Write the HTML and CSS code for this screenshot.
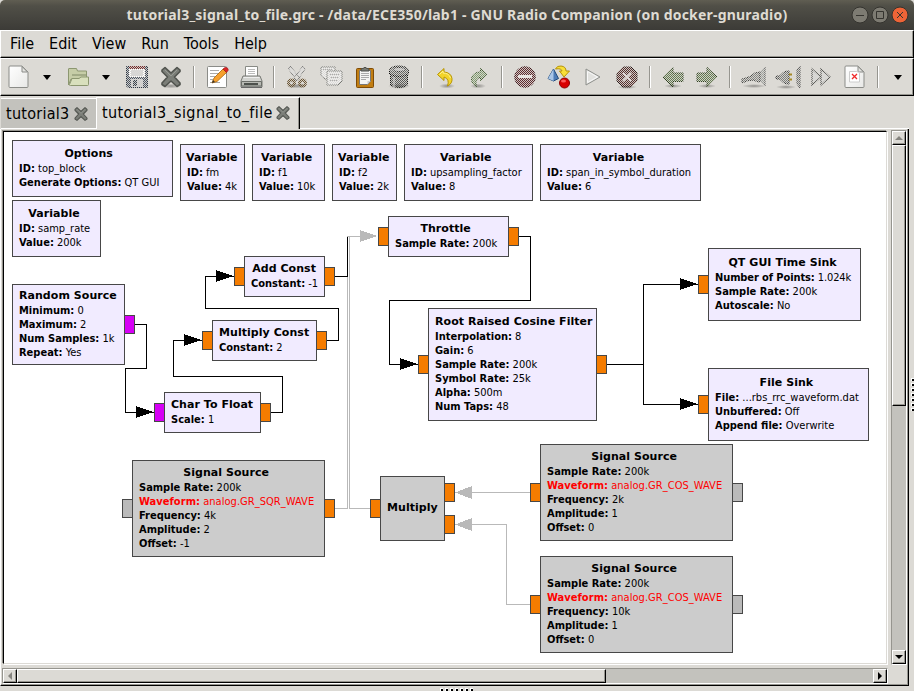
FILE: index.html
```html
<!DOCTYPE html>
<html lang="en">
<head>
<meta charset="utf-8">
<title>GNU Radio Companion</title>
<link rel="stylesheet" href="styles.css">
</head>
<body>
<svg class="defs" width="0" height="0" aria-hidden="true">
  <defs>
    <pattern id="dots" width="2" height="2" patternUnits="userSpaceOnUse">
      <rect width="2" height="2" fill="#fff" fill-opacity=".1"/><rect width="1" height="1" fill="#fff"/><rect x="1" y="1" width="1" height="1" fill="#fff"/>
    </pattern>
    <mask id="dim" maskUnits="userSpaceOnUse" x="0" y="0" width="26" height="26"><rect width="26" height="26" fill="url(#dots)" shape-rendering="crispEdges"/></mask>
    <linearGradient id="paper" x2="1" y2="1"><stop stop-color="#fff"/><stop offset="1" stop-color="#e8e8e6"/></linearGradient>
    <radialGradient id="shade"><stop stop-color="#000" stop-opacity=".35"/><stop offset="1" stop-color="#000" stop-opacity="0"/></radialGradient>
    <symbol id="cross" viewBox="0 0 24 24"><path d="M3 5 6 2.500 12 8 18 2.500 21 5 21 6.500 15.500 12 21 18 21 19.500 18 21.500 12 16 6 21.500 3 19.500 3 18 8.500 12 3 6.500Z" fill="#7b7e78" stroke="#50534e" stroke-width="1.600" stroke-linejoin="round"/><path d="M6 5l6 6 6-6" fill="none" stroke="#979a94" stroke-width="1"/></symbol>
  </defs>
</svg>
<div class="window">
  <header class="titlebar">
    <h1 class="title">tutorial3_signal_to_file.grc - /data/ECE350/lab1 - GNU Radio Companion (on docker-gnuradio)</h1>
    <div class="controls">
      <svg width="58" height="18" viewBox="0 0 58 18"><g stroke="#34332e"><circle cx="9" cy="9" r="8" fill="#7d7b72"/><circle cx="29" cy="9" r="8" fill="#7d7b72"/><circle cx="49" cy="9" r="8" fill="#ee6437"/></g><g fill="none" stroke="#35342f"><path d="M5 9.500h8M25.500 5.500h7v7h-7zM46 6l6 6M52 6l-6 6"/></g></svg>
    </div>
  </header>
  <nav class="menubar"><span>File</span><span>Edit</span><span>View</span><span>Run</span><span>Tools</span><span>Help</span></nav>
  <div class="toolbar">
    <span class="tool"><svg viewBox="0 0 24 24"><path d="M3 1h12l6 6v14.500a1 1 0 0 1-1 1H3a1 1 0 0 1-1-1V2a1 1 0 0 1 1-1z" fill="url(#paper)" stroke="#8b8c88"/><path d="M15 1.500v5.500h5.500z" fill="#e4e4e1" stroke="#8b8c88"/></svg></span>
    <span class="drop"><i></i></span>
    <span class="tool open"><svg viewBox="0 0 24 24"><path d="M2.500 20V4q0-.5.500-.5h7.500l1 2.500h9v8H5z" fill="#c6cda7" stroke="#8c9770"/><path d="M6 10h14" stroke="#7f8967"/><path d="M6 13.500h7l2-1.500h7.500v7.500q0 1-1 1H4.500q-1.500 0-1-1z" fill="#d9e0bd" stroke="#8c9770"/></svg></span>
    <span class="drop"><i></i></span>
    <span class="tool save"><svg viewBox="0 0 24 24"><g class="off-icon" mask="url(#dim)"><path d="M1.500 1.500h21v21H3l-1.500-1.500z" fill="#46566b" stroke="#26374f"/><path d="M4 1h16v11H4z" fill="#fff"/><path d="M4 1h16v3H4z" fill="#922"/><path d="M6 6h12M6 8h12M6 10h12" stroke="#aaa"/><path d="M6 14h12v8H6z" fill="#ccc"/><path d="M8 15h4v6H8z" fill="#345"/></g></svg></span>
    <span class="tool"><svg viewBox="0 0 24 24"><ellipse cx="12" cy="21" rx="10" ry="2.500" fill="url(#shade)"/><use href="#cross" width="24" height="24"/></svg></span>
    <span class="sep"></span>
    <span class="tool"><svg viewBox="0 0 24 24"><rect x="2.500" y="1.500" width="19" height="21" rx="1" fill="#fff" stroke="#8b8c88"/><path d="M5 5.500h9M5 8.500h9M5 11.500h5M5 14.500h3M5 17.500h10" stroke="#aaa"/><path d="m7 18 2-5L18 4l3.500 3.500L12 16.500z" fill="#f6a02d" stroke="#a86509" stroke-width=".8"/><path d="m18 4 2-1.500q3-.5 3.300 2.500L21.500 7.500z" fill="#dd2525" stroke="#a01616" stroke-width=".7"/><path d="m7 18 1-3 2 2z" fill="#333"/></svg></span>
    <span class="tool"><svg viewBox="0 0 24 24"><path d="M6.500 12V1.500h12V12" fill="#fff" stroke="#888a85"/><path d="M9 4.500h7M9 6.500h7M9 8.500h7" stroke="#bbb"/><path d="M4 11h17l2 5v6H2v-6z" fill="#d2d3cf" stroke="#777974"/><path d="M4.500 12.500h16" stroke="#eee"/><path d="M2.500 16.500h20v4.500h-20z" fill="#b7b9b3" stroke="#6b6e68"/><path d="M5 18h14v2H5z" fill="#4c504b"/><path d="M2 22.500h21" stroke="#666"/></svg></span>
    <span class="sep"></span>
    <span class="tool"><svg viewBox="0 0 24 24"><ellipse cx="12" cy="21" rx="10" ry="2.500" fill="url(#shade)"/><g class="off-icon" mask="url(#dim)"><path d="M5 1 3.500 4 12 16l3-3zM18 1l2 3-8 12-3-3z" fill="#ddd" stroke="#777"/><g fill="none" stroke="#79521a" stroke-width="3"><ellipse cx="6.500" cy="18" rx="3" ry="3"/><ellipse cx="17.500" cy="18" rx="3" ry="3"/></g></g></svg></span>
    <span class="tool"><svg viewBox="0 0 24 24"><g class="off-icon" mask="url(#dim)"><g fill="#eee" stroke="#747670"><path d="M2 2h14v12H6l-4-3z"/><path d="M8 6h15v10l-4 4H8z"/></g><path d="M4 4.500h9M11 9.500h9M11 12.500h9M11 15.500h8" stroke="#aaa"/></g></svg></span>
    <span class="tool"><svg viewBox="0 0 24 24"><rect x="3.500" y="3.500" width="17" height="19" rx="1" fill="#c17d11" stroke="#7e4b06"/><path d="M6.500 5.500h11v11l-3 3h-8z" fill="#f5f5f3" stroke="#777"/><path d="M8 8.500h8M8 10.500h8M8 12.500h8M8 14.500h5" stroke="#aaa"/><path d="M17.500 16h-3v3.500z" fill="#ccc"/><path d="M8 6V4l3-1q1-2 2 0l3 1v2z" fill="#777972" stroke="#4f514d"/></svg></span>
    <span class="tool"><svg viewBox="0 0 24 24"><ellipse cx="12" cy="21" rx="11" ry="3" fill="url(#shade)"/><g class="off-icon" mask="url(#dim)"><path d="M3.500 9v11q8.500 5 17 0V9z" fill="#585b56" stroke="#151814"/><ellipse cx="12" cy="5.500" rx="9.500" ry="4.500" fill="#7b7e79" stroke="#111"/><path d="M2.500 6v3q9.500 5 19 0V6" fill="#676a65" stroke="#111"/><path d="M7 12v10" fill="none" stroke="#999" stroke-width="2"/><ellipse cx="12" cy="4.500" rx="6" ry="2" fill="#bbb" stroke="#333"/></g></svg></span>
    <span class="sep"></span>
    <span class="tool"><svg viewBox="0 0 24 24"><ellipse cx="14" cy="21" rx="8" ry="2.500" fill="url(#shade)"/><path d="M4.500 9.500 11 3.500V7q7 .5 8 6.500.5 5-4.500 7.500Q17 14 11 12v3.500z" fill="#f2d42a" stroke="#b79504"/><path d="M6.500 9.500 10 6v2q6 0 7.500 5" fill="none" stroke="#fff18b"/></svg></span>
    <span class="tool"><svg viewBox="0 0 24 24"><ellipse cx="11" cy="21" rx="8" ry="2.500" fill="url(#shade)"/><g class="off-icon" mask="url(#dim)"><path d="M20 9.500 13.500 3.500V7Q5 7 4.500 14q0 5 5 7.500Q7 14 13.500 12v3.500z" fill="#79a65c" stroke="#315e18"/></g></svg></span>
    <span class="sep"></span>
    <span class="tool"><svg viewBox="0 0 24 24"><g class="off-icon" mask="url(#dim)"><circle cx="12" cy="12" r="10.300" fill="#7b2328" stroke="#511419"/></g><path d="M5 10h14v3H5z" fill="#e8e4e1"/></svg></span>
    <span class="tool"><svg viewBox="0 0 24 24"><path d="m6.500 4 5 9.500-5 2.500L1 13.500z" fill="#4d7cb6" stroke="#204a7c"/><path d="M6.500 4v12L1 13.500z" fill="#a9c6e7"/><path d="M8.500 4Q10 .5 14 1q5 .5 5 5h3.500L17 12l-4.500-6H15q-.5-3-6.500-2z" fill="#f8df38" stroke="#b59209"/><circle cx="17.500" cy="18" r="5" fill="#d80000" stroke="#8d0000"/><ellipse cx="16.500" cy="16" rx="2.500" ry="1.500" fill="#fc5b5b"/></svg></span>
    <span class="tool"><svg viewBox="0 0 24 24"><path d="M5 4v16L19 12z" fill="#e2e2df" stroke="#8e908c"/><path d="M6.500 6.500v11L16.500 12z" fill="none" stroke="#f8f8f8"/></svg></span>
    <span class="tool"><svg viewBox="0 0 24 24"><ellipse cx="12" cy="22" rx="10" ry="2" fill="url(#shade)"/><g class="off-icon" mask="url(#dim)"><path d="M8 2h8l6 6v8l-6 6H8l-6-6V8z" fill="#6b2b25" stroke="#341713"/></g><path d="m8 8 8 8M16 8l-8 8" stroke="#dfd8d5" stroke-width="2"/></svg></span>
    <span class="sep"></span>
    <span class="tool"><svg viewBox="0 0 24 24"><ellipse cx="12" cy="21" rx="9" ry="2" fill="url(#shade)"/><g class="off-icon" mask="url(#dim)"><path d="M2 12 12 2.500V8h10v8.500H12V22z" fill="#5c803c" stroke="#27450d"/></g></svg></span>
    <span class="tool"><svg viewBox="0 0 24 24"><ellipse cx="12" cy="21" rx="9" ry="2" fill="url(#shade)"/><g class="off-icon" mask="url(#dim)"><path d="M22 12 12 2.500V8H2v8.500h10V22z" fill="#5c803c" stroke="#27450d"/></g></svg></span>
    <span class="sep"></span>
    <span class="tool"><svg class="wide" viewBox="0 0 26 24"><ellipse cx="13" cy="21" rx="12" ry="2" fill="url(#shade)"/><g class="off-icon" mask="url(#dim)"><path d="M1 14q5-1 9-3 3-4 9-4v10q-4 0-6-2-7 0-12 3z" fill="#858783" stroke="#3c3e3a"/><path d="M19 7l5-5v19l-5-5z" fill="#a0a29d" stroke="#555"/></g></svg></span>
    <span class="tool"><svg class="wide" viewBox="0 0 26 24"><ellipse cx="11" cy="22" rx="10" ry="2" fill="url(#shade)"/><g class="off-icon" mask="url(#dim)"><path d="M1 11h4q3-5 9-5v13q-6 0-9-5H1z" fill="#7c7e79" stroke="#333"/><path d="M22 5l3-4v22l-3-4z" fill="#868884" stroke="#555"/></g><path d="M14 9.500h3M14 14.500h3" stroke="#a58a28" stroke-width="2"/></svg></span>
    <span class="tool"><svg viewBox="0 0 24 24"><g class="off-icon" mask="url(#dim)"><path d="M3 4v16l9-8zM12 4v16l9-8z" fill="#d4d5d2" stroke="#555753" stroke-width="1.300"/></g></svg></span>
    <span class="tool"><svg viewBox="0 0 24 24"><path d="M3 1h12l6 6v14.500a1 1 0 0 1-1 1H3a1 1 0 0 1-1-1V2a1 1 0 0 1 1-1z" fill="url(#paper)" stroke="#8b8c88"/><path d="M15 1.500v5.500h5.500z" fill="#e4e4e1" stroke="#8b8c88"/><path d="M6.500 6.500h7l3 1v9.500h-10z" fill="#fff" stroke="#ccc"/><path d="m9 9 5 5M14 9l-5 5" stroke="#ef2929" stroke-width="1.300"/></svg></span>
    <span class="sep"></span>
    <span class="drop last"><i></i></span>
  </div>
  <div class="tabs">
    <div class="tab"><span>tutorial3</span><svg viewBox="0 0 24 24"><use href="#cross"/></svg></div>
    <div class="tab active"><span>tutorial3_signal_to_file</span><svg viewBox="0 0 24 24"><use href="#cross"/></svg></div>
    <div class="tabs-rest"></div>
  </div>
  <div class="body">
    <div class="page">
      <main class="canvas">
        <svg class="wires" viewBox="4 132 882 531" shape-rendering="crispEdges">
          <g fill="none" stroke="#b9b9b9"><path d="M335 508.500H347.500V236.500H362M370 508.500H349.500V236.500M456 492.500H530M456 524.500H506.500V604.500H530"/></g>
          <g fill="none" stroke="#000"><path d="M135 324.500H146.500V368.500H125.500V412.500H154M271 412.500H282.500V376.500H173.500V340.500H202M327 340.500H338.500V308.500H205.500V276.500H234M335 276.500H347.500V236.500M519 236.500H530.500V300.500H389.500V364.500H418M607 364.500H643.500M698 284.500H643.500V404.500H698"/></g>
          <path fill="#b9b9b9" d="M360 230v12l17-6zM472 486v13l-17-6.500zM472 518v13l-17-6.500z"/>
          <path fill="#000" d="M136 406v12l17-6zM184 334v12l17-6zM216 270v12l17-6zM400 358v12l17-6zM680 278v12l17-6zM680 398v12l17-6z"/>
          <g stroke="#474747">
            <g fill="#d600f5"><path d="M124.500 315.500h10v18h-10zM154.500 403.500h10v18h-10z"/></g>
            <g fill="#f57c00"><path d="M260.500 403.500h10v18h-10zM202.500 331.500h10v18h-10zM316.500 331.500h10v18h-10zM234.500 267.500h10v18h-10zM324.500 267.500h10v18h-10zM378.500 227.500h10v18h-10zM508.500 227.500h10v18h-10zM418.500 355.500h10v18h-10zM596.500 355.500h10v18h-10zM698.500 275.500h10v18h-10zM698.500 395.500h10v18h-10zM324.500 499.500h10v18h-10zM370.500 499.500h10v18h-10zM444.500 483.500h10v18h-10zM444.500 515.500h10v18h-10zM530.500 483.500h10v18h-10zM530.500 595.500h10v18h-10z"/></g>
            <g fill="#bababa"><path d="M122.500 499.500h10v18h-10zM732.500 483.500h10v18h-10zM732.500 595.500h10v18h-10z"/></g>
          </g>
        </svg>
        <section class="node options"><div><h2>Options</h2><p><b>ID:</b> top_block</p><p><b>Generate Options:</b> QT GUI</p></div></section>
        <section class="node fm"><div><h2>Variable</h2><p><b>ID:</b> fm</p><p><b>Value:</b> 4k</p></div></section>
        <section class="node f1"><div><h2>Variable</h2><p><b>ID:</b> f1</p><p><b>Value:</b> 10k</p></div></section>
        <section class="node f2"><div><h2>Variable</h2><p><b>ID:</b> f2</p><p><b>Value:</b> 2k</p></div></section>
        <section class="node upsampling"><div><h2>Variable</h2><p><b>ID:</b> upsampling_factor</p><p><b>Value:</b> 8</p></div></section>
        <section class="node span"><div><h2>Variable</h2><p><b>ID:</b> span_in_symbol_duration</p><p><b>Value:</b> 6</p></div></section>
        <section class="node samp-rate"><div><h2>Variable</h2><p><b>ID:</b> samp_rate</p><p><b>Value:</b> 200k</p></div></section>
        <section class="node random"><div><h2>Random Source</h2><p><b>Minimum:</b> 0</p><p><b>Maximum:</b> 2</p><p><b>Num Samples:</b> 1k</p><p><b>Repeat:</b> Yes</p></div></section>
        <section class="node char-float"><div><h2>Char To Float</h2><p><b>Scale:</b> 1</p></div></section>
        <section class="node mult-const"><div><h2>Multiply Const</h2><p><b>Constant:</b> 2</p></div></section>
        <section class="node add-const"><div><h2>Add Const</h2><p><b>Constant:</b> -1</p></div></section>
        <section class="node throttle"><div><h2>Throttle</h2><p><b>Sample Rate:</b> 200k</p></div></section>
        <section class="node rrc"><div><h2>Root Raised Cosine Filter</h2><p><b>Interpolation:</b> 8</p><p><b>Gain:</b> 6</p><p><b>Sample Rate:</b> 200k</p><p><b>Symbol Rate:</b> 25k</p><p><b>Alpha:</b> 500m</p><p><b>Num Taps:</b> 48</p></div></section>
        <section class="node time-sink"><div><h2>QT GUI Time Sink</h2><p class="points"><b>Number of Points:</b> 1.024k</p><p><b>Sample Rate:</b> 200k</p><p><b>Autoscale:</b> No</p></div></section>
        <section class="node file-sink"><div><h2>File Sink</h2><p><b>File:</b> ...rbs_rrc_waveform.dat</p><p><b>Unbuffered:</b> Off</p><p><b>Append file:</b> Overwrite</p></div></section>
        <section class="node off sqr"><div><h2>Signal Source</h2><p><b>Sample Rate:</b> 200k</p><p class="bad"><b>Waveform:</b> analog.GR_SQR_WAVE</p><p><b>Frequency:</b> 4k</p><p><b>Amplitude:</b> 2</p><p><b>Offset:</b> -1</p></div></section>
        <section class="node off multiply"><div><h2>Multiply</h2></div></section>
        <section class="node off cos1"><div><h2>Signal Source</h2><p><b>Sample Rate:</b> 200k</p><p class="bad"><b>Waveform:</b> analog.GR_COS_WAVE</p><p><b>Frequency:</b> 2k</p><p><b>Amplitude:</b> 1</p><p><b>Offset:</b> 0</p></div></section>
        <section class="node off cos2"><div><h2>Signal Source</h2><p><b>Sample Rate:</b> 200k</p><p class="bad"><b>Waveform:</b> analog.GR_COS_WAVE</p><p><b>Frequency:</b> 10k</p><p><b>Amplitude:</b> 1</p><p><b>Offset:</b> 0</p></div></section>
      </main>
      <div class="scroll vertical"><span class="btn up"></span><span class="thumb"></span><span class="trough"></span><span class="btn down"></span></div>
      <div class="scroll horizontal"><span class="btn left"></span><span class="thumb"></span><span class="trough"></span><span class="btn right"></span></div>
    </div>
    <div class="grip-v"><i></i><i></i><i></i><i></i><i></i><i></i><i></i></div>
  </div>
  <div class="bottom"><i></i><i></i><i></i><i></i><i></i><i></i><i></i></div>
</div>
</body>
</html>
```
FILE: styles.css
```css
* { box-sizing: border-box; }
body { margin: 0; background: #dcdad5; overflow: hidden; }
.defs { position: absolute; }
.window { width: 914px; height: 691px; display: flex; flex-direction: column; background: #dcdad5; color: #000; font: 16px "DejaVu Sans Condensed", "DejaVu Sans", sans-serif; font-stretch: condensed; }
h1, h2, p { margin: 0; }

.titlebar { flex: none; height: 30px; display: flex; justify-content: center; align-items: center; position: relative; background: linear-gradient(#605e52, #504f47 20%, #3c3b37); border-radius: 5px 5px 0 0; }
.title { color: #dfdbd2; font: bold 14px/30px "Noto Sans", "Open Sans", sans-serif; letter-spacing: 0.2px; white-space: nowrap; }
.controls { position: absolute; right: 5px; top: 6px; height: 18px; }
.controls svg { display: block; }

.menubar { flex: none; height: 28px; display: flex; gap: 15px; padding-left: 9px; line-height: 25px; border: 1px solid #000; border-top-color: #fff; border-left-color: #fff; box-shadow: inset -1px -1px #96958f; }
.menubar span { letter-spacing: 0.02px; }
.toolbar { flex: none; height: 38px; display: flex; align-items: center; padding-left: 1px; border: 1px solid #000; border-top-color: #fff; border-left-color: #fff; box-shadow: inset -1px -1px #96958f; }
.tool { flex: none; width: 34px; height: 24px; padding-left: 5px; }
.tool svg { display: block; width: 24px; height: 24px; }
.tool svg.wide { width: 26px; }
.tool.open, .tool.save { margin-left: 3px; }
.off-icon { filter: saturate(0.6); }
.drop { flex: none; width: 22px; display: flex; justify-content: center; }
.drop i { border: solid transparent; border-width: 5px 4.5px 0; border-top-color: #000; }
.drop.last { width: 28px; }
.sep { flex: none; width: 12px; height: 22px; display: flex; }
.sep::before { content: ""; width: 2px; margin-left: 5px; background: linear-gradient(90deg, #96958f 50%, #fff 50%); }

.tabs { flex: none; height: 33px; display: flex; align-items: flex-end; padding-left: 1px; padding-top: 1px; }
.tab { display: flex; align-items: center; height: 31px; width: 95px; padding: 0 0 0 5px; gap: 4px; background: #c3c2bd; border-top: 1px solid #fff; border-bottom: 1px solid #fff; line-height: 28px; letter-spacing: 0.25px; white-space: nowrap; }
.tab svg { flex: none; width: 16px; height: 16px; }
.tab.active { width: 204px; height: 32px; padding: 0 0 2px 5px; gap: 2px; letter-spacing: 0.38px; background: #dcdad5; border: 1px solid #fff; border-bottom: 0; border-right: 1px solid #000; box-shadow: inset -1px 0 #96958f; }
.tabs-rest { flex: 1; height: 1px; margin-right: 5px; background: #fff; }

.body { flex: none; height: 557px; display: flex; align-items: flex-start; }
.page { width: 909px; height: 557px; border-left: 1px solid #fff; border-right: 1px solid #000; border-bottom: 1px solid #000; box-shadow: inset -1px -1px #96958f; padding: 1px; display: grid; grid-template-columns: 886px 16px; grid-template-rows: 535px 16px; column-gap: 3px; row-gap: 3px; }
.canvas { position: relative; width: 884px; height: 533px; margin: 1px; background: #fff; border: 1px solid; border-color: #000 #dcdad5 #dcdad5 #000; box-shadow: -1px -1px #96958f, 1px 1px #fff; }
.wires { position: absolute; left: 0; top: 0; width: 882px; height: 531px; }

.node { position: absolute; background: #f1ebff; border: 1px solid #474747; padding: 6px 0 0 6px; height: 57px; white-space: nowrap; }
.node > div { width: max-content; }
.node.off { background: #cccccc; }
.node h2 { font: bold 11px/14px "DejaVu Sans", sans-serif; letter-spacing: 0.05px; text-align: center; margin: 0 0 1px -1px; }
.node.random h2, .node.char-float h2, .node.mult-const h2, .node.rrc h2, .node.multiply h2 { margin-left: 0; }
.node p { font-size: 11px; line-height: 14px; }
.node .bad { color: #f00; letter-spacing: 0.04px; }
.node .points { letter-spacing: -0.1px; }
.options { left: 8px; top: 8px; width: 161px; }
.fm { left: 176px; top: 12px; width: 65px; }
.f1 { left: 248px; top: 12px; width: 73px; }
.f2 { left: 328px; top: 12px; width: 65px; }
.upsampling { left: 400px; top: 12px; width: 129px; }
.span { left: 536px; top: 12px; width: 161px; }
.samp-rate { left: 8px; top: 68px; width: 89px; }
.random { left: 8px; top: 152px; width: 113px; height: 81px; padding-top: 4px; }
.char-float { left: 160px; top: 260px; width: 97px; height: 41px; padding-top: 5px; }
.mult-const { left: 208px; top: 188px; width: 105px; height: 41px; padding-top: 5px; }
.add-const { left: 240px; top: 124px; width: 81px; height: 41px; padding-top: 5px; }
.throttle { left: 384px; top: 84px; width: 121px; height: 41px; padding-top: 5px; }
.rrc { left: 424px; top: 176px; width: 169px; height: 113px; }
.time-sink { left: 704px; top: 116px; width: 153px; height: 73px; padding-top: 7px; }
.file-sink { left: 704px; top: 236px; width: 161px; height: 73px; padding-top: 7px; }
.sqr, .cos1, .cos2 { width: 193px; height: 97px; padding-top: 5px; }
.sqr { left: 128px; top: 328px; }
.cos1 { left: 536px; top: 312px; }
.cos2 { left: 536px; top: 424px; }
.multiply { left: 376px; top: 344px; width: 65px; height: 65px; padding-top: 24px; }

.scroll { display: flex; background: #c3c2bd; border: 1px solid #96958f; border-right-color: #fff; border-bottom-color: #fff; }
.scroll.vertical { flex-direction: column; height: 535px; }
.scroll.horizontal { width: 886px; }
.btn { flex: none; display: flex; align-items: center; justify-content: center; width: 14px; height: 14px; }
.btn, .thumb { background: #dcdad5; border: 1px solid; border-color: #fff #000 #000 #fff; box-shadow: inset -1px -1px #96958f; }
.btn::before { content: ""; border: 4px solid transparent; }
.btn.up::before { border-width: 0 4px 4px; border-bottom-color: #85847f; }
.btn.down::before { border-width: 4px 4px 0; border-top-color: #000; }
.btn.left::before { border-width: 4px 4px 4px 0; border-right-color: #85847f; }
.btn.right::before { border-width: 4px 0 4px 4px; border-left-color: #000; }
.trough { flex: 1; }
.vertical .thumb { height: 261px; }
.horizontal .thumb { width: 589px; }

.grip-v { display: flex; flex-direction: column; gap: 2px; margin: 249px 0 0 2px; }
.bottom { flex: 1; display: flex; gap: 2px; padding: 2px 0 0 440px; }
.grip-v i, .bottom i { width: 3px; height: 3px; background: linear-gradient(#000, #000) 1px 1px / 2px 2px no-repeat #fff; }
```
